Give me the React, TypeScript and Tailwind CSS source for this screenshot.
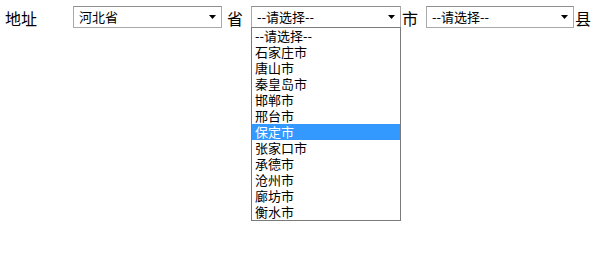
import React from "react";

function Sel({ w, text, children }: { w: string; text: string; children?: React.ReactNode }) {
  return (
    <div className={`relative ${w} h-[22px]`}>
      <div className="flex h-full items-center justify-between border border-[#a9a9a9] border-t-[#8f8f8f] bg-white pl-[5px] pr-[5px]">
        <span className="text-[13px] leading-none text-black">{text}</span>
        <svg width="7" height="4" viewBox="0 0 7 4" className="mt-[1px]">
          <polygon points="0,0 7,0 3.5,4" fill="#000" />
        </svg>
      </div>
      {children}
    </div>
  );
}

const items = ["--请选择--", "石家庄市", "唐山市", "秦皇岛市", "邯郸市", "邢台市", "保定市", "张家口市", "承德市", "沧州市", "廊坊市", "衡水市"];

export default function App() {
  return (
    <div className="h-[253px] w-[607px] bg-white font-['Noto_Sans_CJK_SC','Noto_Sans',sans-serif] text-black">
      <div className="flex items-center pl-[5px] pt-[4px]">
        <span className="w-[68px] text-[16px] leading-[22px] mt-[3px]">地址</span>
        <Sel w="w-[149px]" text="河北省" />
        <span className="ml-[5px] mr-[8px] text-[16px] leading-[22px] mt-[2px]">省</span>
        <Sel w="w-[150px]" text="--请选择--">
          <div className="absolute left-0 top-[21px] w-[150px] border border-[#7a7a7a] bg-white">
            {items.map((it) => (
              <div
                key={it}
                className={`flex h-[16px] items-center pl-[3px] text-[13px] leading-[16px] ${it === "保定市" ? "bg-[#3399ff] text-white" : "text-black"}`}
              >
                {it}
              </div>
            ))}
          </div>
        </Sel>
        <span className="ml-[1px] mr-[8px] text-[16px] leading-[22px] mt-[2px]">市</span>
        <Sel w="w-[148px]" text="--请选择--" />
        <span className="ml-[1px] text-[16px] leading-[22px] mt-[2px]">县</span>
      </div>
    </div>
  );
}
